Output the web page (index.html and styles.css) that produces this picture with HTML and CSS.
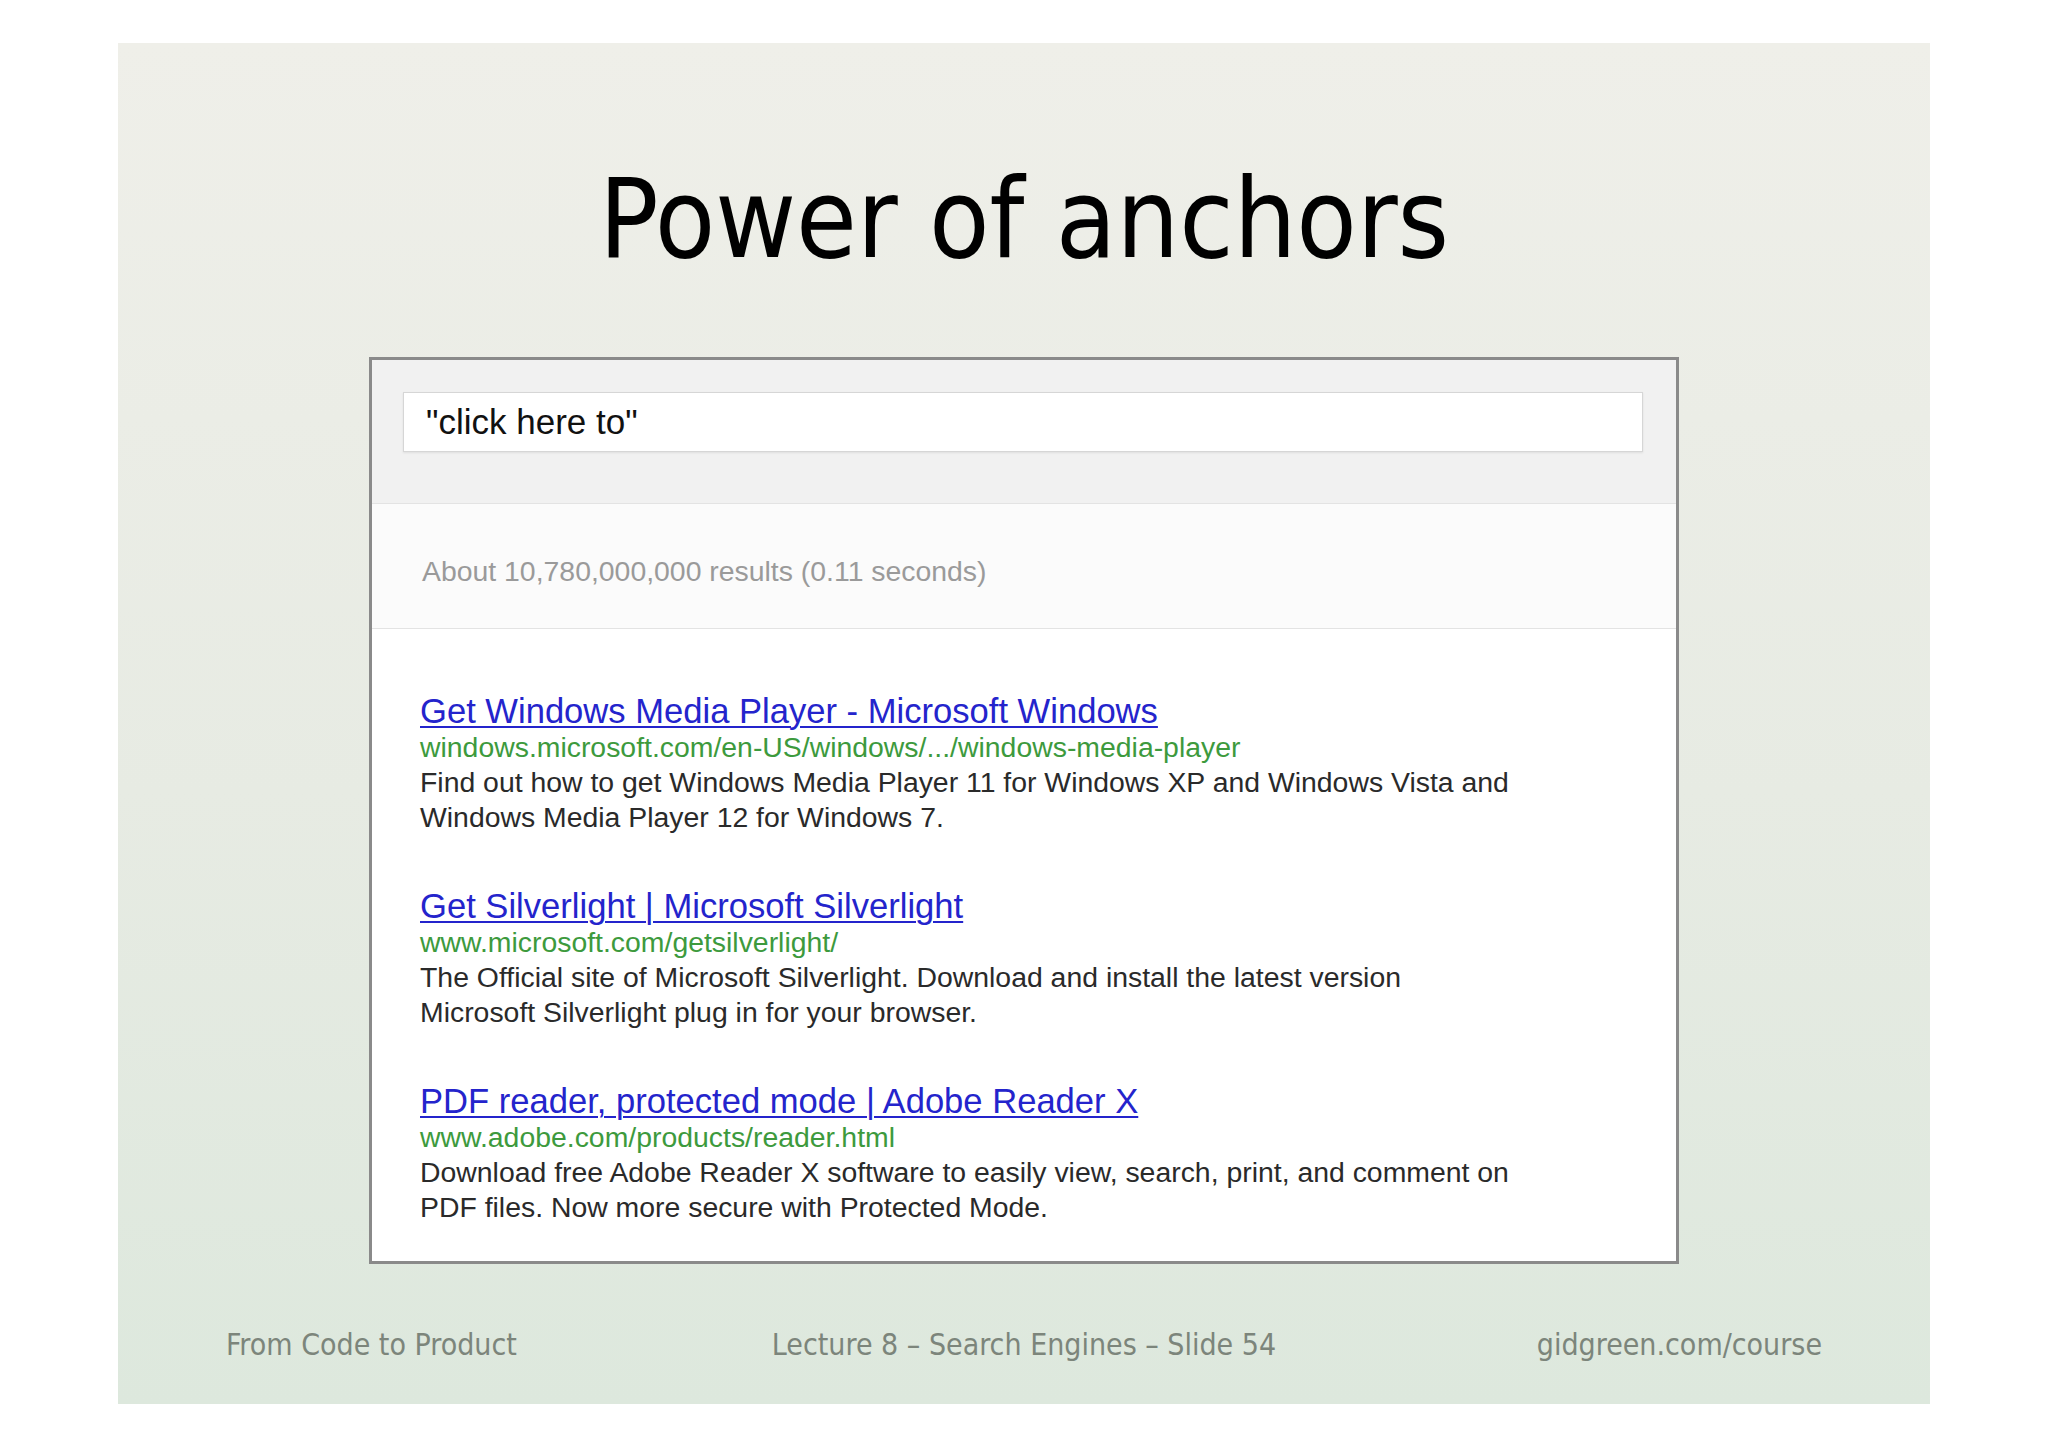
FILE: index.html
```html
<!DOCTYPE html>
<html lang="en">

<head>
  <meta charset="UTF-8">
  <title>Power of anchors</title>
  <link rel="stylesheet" href="styles.css">
</head>

<body>
  <div class="slide">
    <h1 class="slide-title">Power of anchors</h1>

    <div class="shot">
      <div class="search-bar">
        <div class="search-input">"click here to"</div>
      </div>
      <div class="result-count">About 10,780,000,000 results (0.11 seconds)</div>
      <div class="results">
        <div class="result">
          <a class="result-title" href="#">Get Windows Media Player - Microsoft Windows</a>
          <div class="result-url">windows.microsoft.com/en-US/windows/.../windows-media-player</div>
          <div class="result-snippet">Find out how to get Windows Media Player 11 for Windows XP and Windows Vista and<br>Windows Media Player 12 for Windows 7.</div>
        </div>
        <div class="result">
          <a class="result-title" href="#">Get Silverlight | Microsoft Silverlight</a>
          <div class="result-url">www.microsoft.com/getsilverlight/</div>
          <div class="result-snippet">The Official site of Microsoft Silverlight. Download and install the latest version<br>Microsoft Silverlight plug in for your browser.</div>
        </div>
        <div class="result">
          <a class="result-title" href="#">PDF reader, protected mode | Adobe Reader X</a>
          <div class="result-url">www.adobe.com/products/reader.html</div>
          <div class="result-snippet">Download free Adobe Reader X software to easily view, search, print, and comment on<br>PDF files. Now more secure with Protected Mode.</div>
        </div>
      </div>
    </div>

    <div class="footer">
      <span class="footer-left">From Code to Product</span>
      <span class="footer-mid">Lecture 8 – Search Engines – Slide 54</span>
      <span class="footer-right">gidgreen.com/course</span>
    </div>
  </div>
</body>

</html>
```

FILE: styles.css
```css
html, body {
  margin: 0;
  background: #fff;
}

body {
  padding: 43px 118px;
  height: 1447px;
  box-sizing: border-box;
}

.slide {
  height: 1361px;
  background: linear-gradient(to bottom, #efefe9 0%, #e7ebe3 55%, #dde8dd 100%);
  display: flex;
  flex-direction: column;
  align-items: center;
  font-family: "DejaVu Sans Condensed", "DejaVu Sans", sans-serif;
}

.slide-title {
  margin: 121px 0 0;
  font-size: 110px;
  line-height: 110px;
  font-weight: normal;
  color: #000;
}

.shot {
  margin-top: 83px;
  width: 1304px;
  border: 3px solid #8a8a8a;
  background: #fff;
  font-family: "Liberation Sans", Arial, sans-serif;
}

.search-bar {
  background: #f1f1f1;
  border-bottom: 1px solid #e3e3e3;
  padding: 32px 33px 51px 31px;
}

.search-input {
  height: 58px;
  background: #fff;
  border: 1px solid #d6d6d6;
  box-shadow: 0 1px 2px rgba(0, 0, 0, 0.08);
  padding-left: 22px;
  font-size: 35px;
  line-height: 58px;
  color: #111;
}

.result-count {
  background: #fbfbfb;
  border-bottom: 1px solid #e3e3e3;
  padding: 50px 0 40px 50px;
  font-size: 28.4px;
  line-height: 34px;
  color: #9a9a9a;
}

.results {
  padding: 64px 48px 36px;
  display: flex;
  flex-direction: column;
  gap: 53px;
}

.result-title {
  display: block;
  width: max-content;
  font-size: 34.6px;
  line-height: 37px;
  color: #2424cc;
  text-decoration: underline;
  text-decoration-thickness: 2px;
  text-underline-offset: 3px;
}

.result-url {
  font-size: 28.4px;
  line-height: 35px;
  color: #3d9a3d;
}

.result-snippet {
  font-size: 28.4px;
  line-height: 35px;
  color: #2a2a2a;
}

.footer {
  margin-top: 61px;
  width: 100%;
  box-sizing: border-box;
  padding: 0 108px;
  display: grid;
  grid-template-columns: 1fr auto 1fr;
  font-size: 30px;
  line-height: 40px;
  color: #7c857b;
}

.footer-right {
  text-align: right;
}
```
